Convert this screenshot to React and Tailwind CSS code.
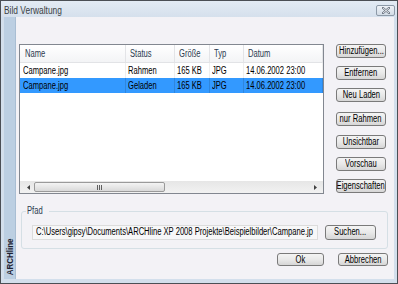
import React from "react";

const font = "font-['Liberation_Sans',Arial,sans-serif]";

function T({ children, className = "", center = false }) {
  return (
    <span
      className={`inline-block whitespace-nowrap scale-x-[0.76] ${center ? "origin-center" : "origin-left"} ${className}`}
    >
      {children}
    </span>
  );
}

function Btn({ children, className = "" }) {
  return (
    <div
      className={`flex items-center justify-center border border-[#7a7a7a] rounded-[3px] bg-gradient-to-b from-[#f4f4f4] via-[#e9e9e9] to-[#d6d6d6] text-[10px] text-black leading-none ${className}`}
    >
      <T center>{children}</T>
    </div>
  );
}

const cols = [
  { name: "Name", w: "w-[106px]" },
  { name: "Status", w: "w-[49px]" },
  { name: "Größe", w: "w-[35px]" },
  { name: "Typ", w: "w-[34px]" },
  { name: "Datum", w: "w-[79px]" },
];

const rows = [
  ["Campane.jpg", "Rahmen", "165 KB", "JPG", "14.06.2002 23:00"],
  ["Campane.jpg", "Geladen", "165 KB", "JPG", "14.06.2002 23:00"],
];

export default function App() {
  return (
    <div
      className={`w-[398px] h-[284px] overflow-hidden flex flex-col border border-[#4b4f55] bg-[#d3dfec] ${font} text-black`}
    >
      {/* Title bar */}
      <div className="h-[16px] shrink-0 flex items-center justify-between pl-[3px] pr-[2px] bg-gradient-to-b from-[#e3ebf4] to-[#d5e0ec]">
        <span className="text-[10.5px] text-[#3b3f44] leading-none mt-[2px] inline-block whitespace-nowrap scale-x-[0.8] origin-left">
          Bild Verwaltung
        </span>
        <div className="w-[19px] h-[11px] mt-[3px] flex items-center justify-center border border-[#8d9aa8] rounded-[2px] bg-gradient-to-b from-[#eef2f7] to-[#d3dce6]">
          <svg width="8" height="7" viewBox="0 0 8 7">
            <path d="M1 1 L7 6 M7 1 L1 6" stroke="#6b7480" strokeWidth="2.2" strokeLinecap="square" />
            <path d="M1 1 L7 6 M7 1 L1 6" stroke="#f4f6f9" strokeWidth="0.9" />
          </svg>
        </div>
      </div>

      {/* Body */}
      <div className="flex-1 min-h-0 flex ml-[3px] mr-[3px] mb-[4px] bg-[#f3f2f6]">
        {/* Sidebar */}
        <div className="w-[12px] bg-[#bccfe2] border-r border-[#a9bed3] flex flex-col justify-end items-center">
          <span className="[writing-mode:vertical-rl] rotate-180 scale-y-[0.84] origin-center text-[9.5px] font-bold text-[#1c2233] leading-none">
            ARCHline
          </span>
        </div>

        {/* Content */}
        <div className="flex-1 flex flex-col pl-[3px] pr-[5px] pt-[27px]">
          <div className="flex gap-[12px]">
            {/* List view */}
            <div className="w-[305px] h-[150px] border border-[#828790] bg-white flex flex-col">
              <div className="h-[18px] flex bg-gradient-to-b from-white to-[#f3f4f6] border-b border-[#e2e3e6]">
                {cols.map((c, i) => (
                  <div
                    key={c.name}
                    className={`${c.w} h-full flex items-center border-r border-[#e3e4e7] text-[10px] text-[#2b3a4f] leading-none ${i === 0 ? "pl-[5px]" : "pl-[4px]"}`}
                  >
                    <T>{c.name}</T>
                  </div>
                ))}
              </div>
              {rows.map((r, ri) => (
                <div
                  key={ri}
                  className={`h-[15px] flex ${ri === 1 ? "bg-[#3399ff]" : "bg-white"}`}
                >
                  {r.map((t, i) => (
                    <div
                      key={i}
                      className={`${cols[i].w} h-full flex items-center border-r ${ri === 1 ? "border-[#2f86de]" : "border-[#efefef]"} text-[10px] leading-none ${i === 0 ? "pl-[3px]" : "pl-[2px]"}`}
                    >
                      <T>{t}</T>
                    </div>
                  ))}
                </div>
              ))}
              <div className="flex-1" />
              {/* Scrollbar */}
              <div className="h-[12px] flex items-center bg-gradient-to-b from-[#e6e6e6] to-[#f2f2f2] px-[3px]">
                <div className="w-[10px] flex items-center justify-center">
                  <svg width="3" height="5" viewBox="0 0 3 5"><path d="M3 0 L0 2.5 L3 5Z" fill="#404040" /></svg>
                </div>
                <div className="ml-[1px] w-[131px] h-[10px] border border-[#9a9a9a] rounded-[2px] bg-gradient-to-b from-[#f4f4f4] to-[#d9d9d9] flex items-center justify-center gap-[1px]">
                  <div className="w-[1px] h-[5px] bg-[#5f5f5f]" />
                  <div className="w-[1px] h-[5px] bg-[#5f5f5f]" />
                  <div className="w-[1px] h-[5px] bg-[#5f5f5f]" />
                </div>
                <div className="flex-1" />
                <div className="w-[10px] flex items-center justify-center">
                  <svg width="3" height="5" viewBox="0 0 3 5"><path d="M0 0 L3 2.5 L0 5Z" fill="#404040" /></svg>
                </div>
              </div>
            </div>

            {/* Buttons */}
            <div className="w-[50px] flex flex-col">
              <Btn className="h-[14px]">Hinzufügen...</Btn>
              <Btn className="h-[14px] mt-[8px]">Entfernen</Btn>
              <Btn className="h-[14px] mt-[8px]">Neu Laden</Btn>
              <Btn className="h-[14px] mt-[10px]">nur Rahmen</Btn>
              <Btn className="h-[14px] mt-[9px]">Unsichtbar</Btn>
              <Btn className="h-[14px] mt-[8px]">Vorschau</Btn>
              <Btn className="h-[14px] mt-[8px]">Eigenschaften</Btn>
            </div>
          </div>

          {/* Pfad group */}
          <div className="relative mt-[17px] ml-[2px] w-[367px] h-[38px] border border-[#d5dfe5] rounded-[3px] flex items-center pl-[10px] pt-[4px]">
            <span className="absolute left-[4px] top-[-6px] px-[1px] bg-[#f3f2f6] text-[10px] text-[#2b3a4f] leading-none">
              <T>Pfad</T>
            </span>
            <div className="w-[286px] h-[15px] border border-[#dcdcdc] bg-[#f7f7f8] flex items-center pl-[3px] text-[10px] leading-none overflow-hidden">
              <T>C:\Users\gipsy\Documents\ARCHline XP 2008 Projekte\Beispielbilder\Campane.jp</T>
            </div>
            <Btn className="ml-[7px] w-[51px] h-[15px]">Suchen...</Btn>
          </div>

          {/* Bottom buttons */}
          <div className="mt-[4px] flex justify-end gap-[14px] pr-[1px]">
            <Btn className="w-[47px] h-[13px]">Ok</Btn>
            <Btn className="w-[50px] h-[13px]">Abbrechen</Btn>
          </div>
        </div>
      </div>
    </div>
  );
}
